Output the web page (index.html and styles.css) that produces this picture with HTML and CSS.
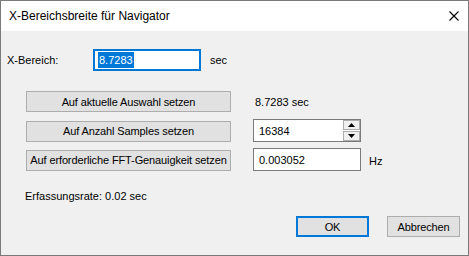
FILE: index.html
```html
<!DOCTYPE html>
<html>
<head>
<meta charset="utf-8">
<link rel="stylesheet" href="styles.css">
</head>
<body>
<div class="window">
  <div class="titlebar">
    <span class="title">X-Bereichsbreite für Navigator</span>
    <svg class="close" width="10" height="10" viewBox="0 0 10 10"><path d="M0.5 0.5 L9.5 9.5 M9.5 0.5 L0.5 9.5" stroke="#000" stroke-width="1.1" fill="none"/></svg>
  </div>
  <div class="content">
    <div class="row1">
      <span class="lbl">X-Bereich:</span>
      <div class="edit focused"><span class="sel">8.7283</span></div>
      <span class="unit1">sec</span>
    </div>
    <div class="grid">
      <div class="btn wide r2">Auf aktuelle Auswahl setzen</div>
      <div class="val r2">8.7283 sec</div>
      <div class="btn wide r3">Auf Anzahl Samples setzen</div>
      <div class="edit spin r3">
        <span class="txt">16384</span>
        <div class="spinbtns">
          <div class="sb"><svg width="7" height="4" viewBox="0 0 7 4"><path d="M3.5 0 L7 4 L0 4 Z" fill="#000"/></svg></div>
          <div class="sb"><svg width="7" height="4" viewBox="0 0 7 4"><path d="M0 0 L7 0 L3.5 4 Z" fill="#000"/></svg></div>
        </div>
      </div>
      <div class="btn wide r4">Auf erforderliche FFT-Genauigkeit setzen</div>
      <div class="r4 pair">
        <div class="edit"><span class="txt">0.003052</span></div>
        <span class="unit2">Hz</span>
      </div>
    </div>
    <div class="rate">Erfassungsrate: 0.02 sec</div>
    <div class="actions">
      <div class="btn small default">OK</div>
      <div class="btn small">Abbrechen</div>
    </div>
  </div>
</div>
</body>
</html>
```
FILE: styles.css
```css
* { box-sizing: border-box; }
html, body { margin: 0; padding: 0; }
body {
  font-family: "Liberation Sans", Arial, sans-serif;
  font-size: 11px;
  color: #000;
  background: #f0f0f0;
}
.window {
  width: 469px;
  height: 256px;
  border: 1px solid #7a7a7a;
  background: #f0f0f0;
  display: flex;
  flex-direction: column;
}
.titlebar {
  height: 30px;
  background: #fff;
  display: flex;
  align-items: center;
  justify-content: space-between;
  padding: 0 9px 0 8px;
  flex: none;
}
.title { font-size: 12px; }
.content {
  display: flex;
  flex-direction: column;
  flex: 1;
}
.row1 {
  display: flex;
  align-items: center;
  height: 22px;
  margin-top: 18px;
  padding-left: 6px;
}
.lbl { width: 86px; }
.edit {
  width: 108px;
  height: 23px;
  background: #fff;
  border: 1px solid #7a7a7a;
  display: flex;
  align-items: center;
  padding-left: 5px;
}
.edit.focused {
  height: 22px;
  border: 2px solid #0078d7;
  padding-left: 3px;
}
.sel {
  background: #0078d7;
  color: #fff;
  line-height: 16px;
  padding: 0 1px;
}
.unit1 { margin-left: 9px; }
.grid {
  display: grid;
  grid-template-columns: 205px auto;
  column-gap: 22px;
  align-items: center;
  margin-left: 25px;
  margin-top: 20px;
}
.r2 { grid-row: 1; }
.r3 { grid-row: 2; margin-top: 7px; }
.r4 { grid-row: 3; margin-top: 6px; }
.val { padding-left: 2px; }
.btn {
  background: #e1e1e1;
  border: 1px solid #adadad;
  display: flex;
  align-items: center;
  justify-content: center;
  height: 21px;
  letter-spacing: -0.12px;
}
.btn.wide { width: 205px; }
.grid .btn.r3 { margin-top: 8px; }
.grid .btn.r4 { margin-top: 7px; }
.spin {
  justify-content: space-between;
  padding-right: 0;
}
.spinbtns {
  display: flex;
  flex-direction: column;
  gap: 1px;
  height: 21px;
  width: 17px;
}
.sb {
  flex: 1;
  background: #f0f0f0;
  border: 1px solid #adadad;
  display: flex;
  align-items: center;
  justify-content: center;
}
.pair { display: flex; align-items: center; }
.unit2 { margin-left: 8px; margin-top: 3px; }
.rate {
  margin-left: 24px;
  margin-top: 18px;
  line-height: 14px;
}
.actions {
  display: flex;
  justify-content: flex-end;
  gap: 18px;
  padding-right: 8px;
  margin-top: 13px;
}
.btn.small { width: 73px; }
.btn.default { border: 2px solid #0078d7; }
```
